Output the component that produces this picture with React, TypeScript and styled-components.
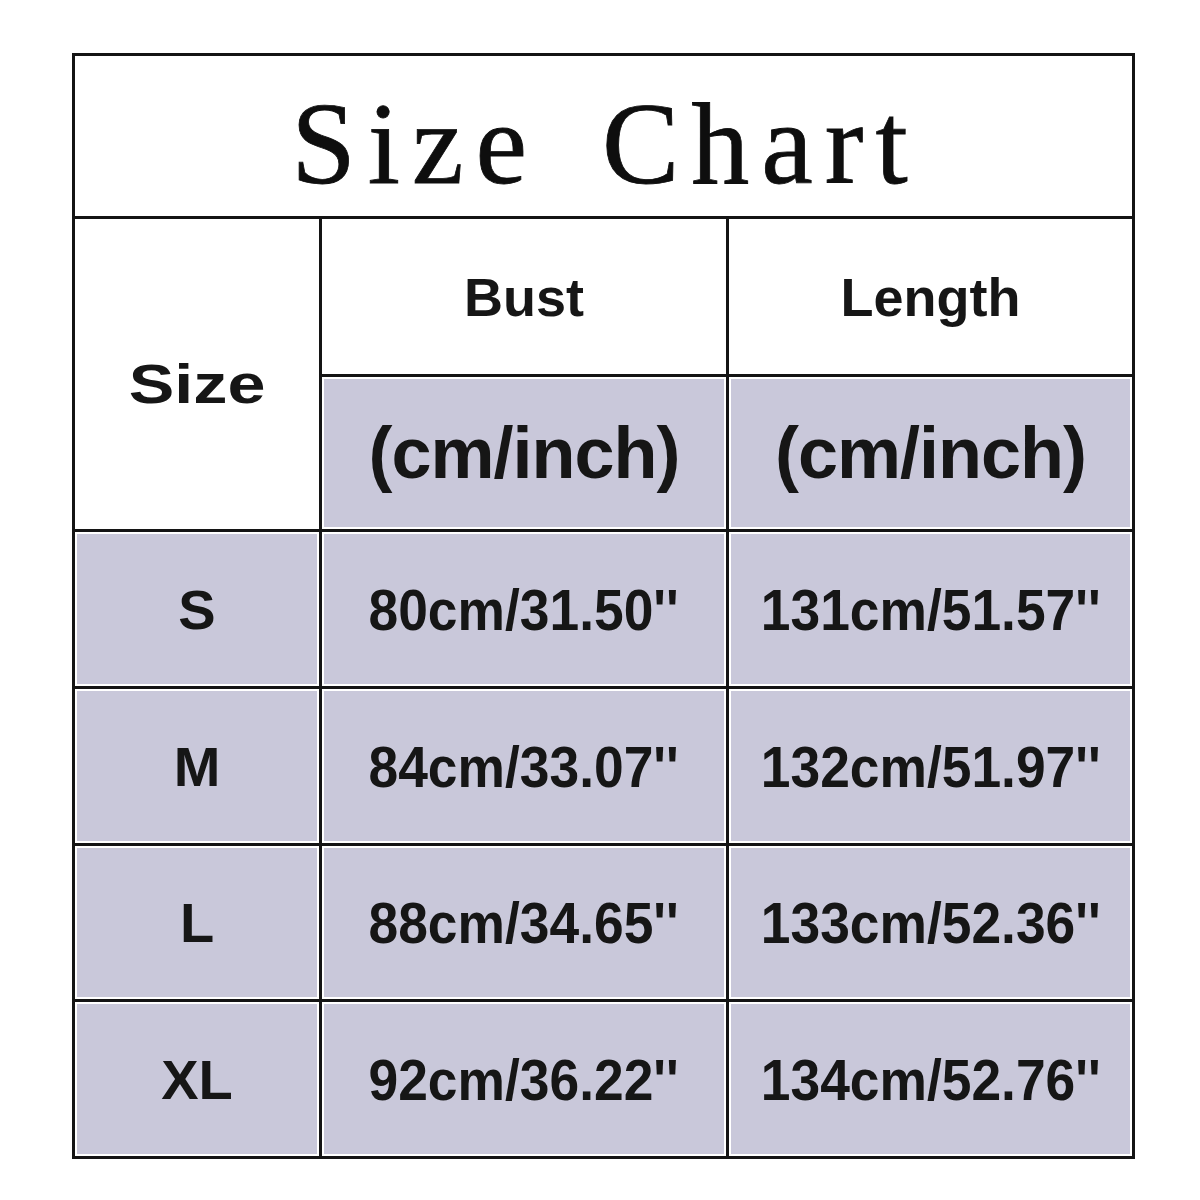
import React from 'react';
import styled, { createGlobalStyle } from 'styled-components';

const GlobalStyle = createGlobalStyle`
  html, body {
    margin: 0;
    padding: 0;
    background: #ffffff;
  }
`;

const rows = [
  { size: 'S', bust: "80cm/31.50''", length: "131cm/51.57''" },
  { size: 'M', bust: "84cm/33.07''", length: "132cm/51.97''" },
  { size: 'L', bust: "88cm/34.65''", length: "133cm/52.36''" },
  { size: 'XL', bust: "92cm/36.22''", length: "134cm/52.76''" },
];

const App = () => {
  return (
    <>
      <GlobalStyle />
      <Page>
        <Chart>
          <TitleCell>Size Chart</TitleCell>
          <SizeHead>
            <Wide>Size</Wide>
          </SizeHead>
          <HeadCell>Bust</HeadCell>
          <HeadCell>Length</HeadCell>
          <UnitCell>(cm/inch)</UnitCell>
          <UnitCell>(cm/inch)</UnitCell>
          {rows.map((row) => (
            <React.Fragment key={row.size}>
              <SizeCell>{row.size}</SizeCell>
              <ValueCell>
                <Narrow>{row.bust}</Narrow>
              </ValueCell>
              <ValueCell>
                <Narrow>{row.length}</Narrow>
              </ValueCell>
            </React.Fragment>
          ))}
        </Chart>
      </Page>
    </>
  );
};

const Page = styled.div`
  width: 1200px;
  height: 1200px;
  padding: 53px 0 0 72px;
  box-sizing: border-box;
  background: #ffffff;
`;

const Chart = styled.div`
  display: grid;
  grid-template-columns: 244px 404px 403px;
  grid-template-rows: 160px 155px 152px 154px 154px 153px 154px;
  gap: 3px;
  padding: 3px;
  width: 1063px;
  box-sizing: border-box;
  background: #141414;
`;

const Cell = styled.div<{ $grey?: boolean }>`
  display: flex;
  align-items: center;
  justify-content: center;
  background: ${({ $grey }) => ($grey ? '#c9c8da' : '#ffffff')};
  box-shadow: inset 0 0 0 2px #ffffff;
  color: #161616;
  font-family: 'Liberation Sans', Arial, sans-serif;
  font-weight: bold;
  white-space: nowrap;
  overflow: hidden;
`;

const TitleCell = styled(Cell)`
  grid-column: 1 / span 3;
  padding-top: 16px;
  padding-left: 4px;
  box-sizing: border-box;
  font-family: 'Liberation Serif', 'Times New Roman', serif;
  font-weight: normal;
  font-size: 116px;
  letter-spacing: 12px;
  word-spacing: 22px;
  line-height: 1;
  color: #0e0e0e;
  -webkit-text-stroke: 0.8px #0e0e0e;
`;

const SizeHead = styled(Cell)`
  grid-row: 2 / span 2;
  padding-top: 18px;
  box-sizing: border-box;
  font-size: 56px;
`;

const Wide = styled.span`
  display: inline-block;
  transform: scaleX(1.22);
`;

const HeadCell = styled(Cell)`
  font-size: 54px;
`;

const UnitCell = styled(Cell).attrs({ $grey: true })`
  font-size: 72px;
  letter-spacing: -1px;
`;

const SizeCell = styled(Cell).attrs({ $grey: true })`
  font-size: 56px;
`;

const ValueCell = styled(Cell).attrs({ $grey: true })`
  font-size: 58px;
`;

const Narrow = styled.span`
  display: inline-block;
  transform: scaleX(0.92);
`;

export default App;
